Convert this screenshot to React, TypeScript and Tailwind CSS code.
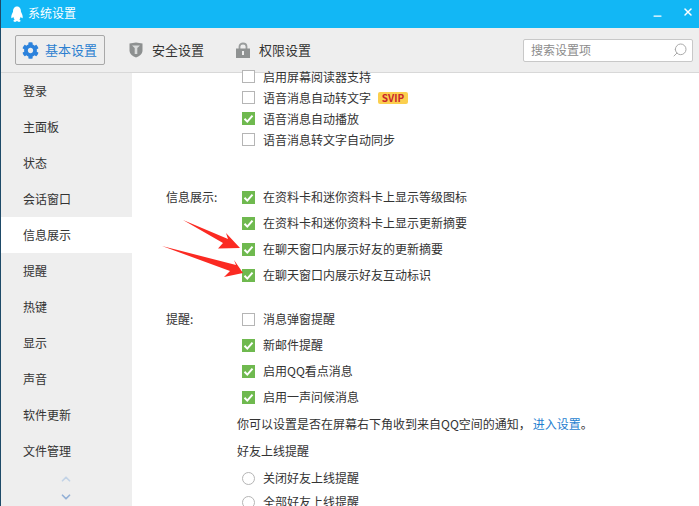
import { Search, Minus, X, ChevronUp, ChevronDown } from "lucide-react";
import { FaCog } from "react-icons/fa";

const menu = ["登录", "主面板", "状态", "会话窗口", "信息展示", "提醒", "热键", "显示", "声音", "软件更新", "文件管理"];

function Check({ on, label, extra }: { on?: boolean; label: string; extra?: boolean }) {
  return (
    <div className="flex items-center h-full">
      {on ? (
        <span className="w-[13px] h-[13px] bg-[#6fb94f] flex items-center justify-center shrink-0">
          <svg viewBox="0 0 13 13" className="w-[13px] h-[13px]">
            <path d="M2.5 6.8 L5.3 9.6 L10.5 3.6" fill="none" stroke="#fff" strokeWidth="2" />
          </svg>
        </span>
      ) : (
        <span className="w-[13px] h-[13px] bg-white border border-[#b5b5b5] shrink-0" />
      )}
      <span className="ml-2 text-[#333]">{label}</span>
      {extra && (
        <span className="ml-[7px] h-[12px] w-[30px] rounded-[2px] bg-[#fbcf4e] text-[#c8262c] text-[10px] leading-[12px] font-bold text-center">
          SVIP
        </span>
      )}
    </div>
  );
}

function Radio({ label }: { label: string }) {
  return (
    <div className="flex items-center h-full">
      <span className="w-[13px] h-[13px] rounded-full bg-white border border-[#b5b5b5] shrink-0" />
      <span className="ml-2 text-[#333]">{label}</span>
    </div>
  );
}

export default function App() {
  return (
    <div
      className="w-[699px] h-[506px] overflow-hidden flex flex-col bg-white text-[12px] border-l border-[#1e4a68] relative"
      style={{ fontFamily: '"Noto Sans CJK SC", "Noto Sans", sans-serif' }}
    >
      <div className="h-[28px] shrink-0 bg-[#12b7f5] flex items-center pl-[9px] text-white">
        <svg viewBox="0 0 14 18" className="w-[14px] h-[17px] mt-[1px]">
          <path
            d="M7 0.500C3.800 0.500 2.800 3.200 2.800 6.200C1.800 8 0.600 10.500 1 12.800C1.800 13.200 2.400 12.300 3 11.500C3.300 12.800 3.800 13.600 4.500 14.200C3.300 14.700 2.800 15.600 3.600 16.500C5 17.200 6.300 16.600 7 16C7.700 16.600 9 17.200 10.400 16.500C11.200 15.600 10.700 14.700 9.500 14.200C10.200 13.600 10.700 12.800 11 11.500C11.600 12.300 12.200 13.200 13 12.800C13.400 10.500 12.200 8 11.200 6.200C11.200 3.200 10.200 0.500 7 0.500Z"
            fill="#fff"
          />
        </svg>
        <span className="ml-[4px] -mt-[2px]">系统设置</span>
        <Minus className="w-[13px] h-[12px] ml-auto mt-[4px] mr-[18px]" strokeWidth={2.5} />
        <X className="w-[12px] h-[12px] mr-[5px] -mt-[4px]" strokeWidth={3} />
      </div>

      <div className="h-[45px] shrink-0 bg-[#eeeeee] border-b border-[#d8d8d8] flex items-center text-[13px] text-[#333] pl-[14px] pr-[5px]">
        <div className="w-[90px] h-[30px] border border-[#a8a8a8] rounded-[2px] flex items-center pl-[6px] text-[#2c7fd0]">
          <FaCog className="w-[17px] h-[17px] text-[#2c82dc]" />
          <span className="ml-[6px]">基本设置</span>
        </div>
        <svg viewBox="0 0 14 16" className="w-[14px] h-[16px] ml-[24px]">
          <path d="M0.500 1.500L7 0.500L13.500 1.500V8.500C13.500 12 10 14.500 7 15.500C4 14.500 0.500 12 0.500 8.500Z" fill="#8d9090" />
          <path d="M3 3.500H11L8.300 6V12H5.700V6Z" fill="#d9dbdb" />
        </svg>
        <span className="ml-[9px]">安全设置</span>
        <svg viewBox="0 0 14 16" className="w-[14px] h-[16px] ml-[32px]">
          <path d="M3.500 7V4.500C3.500 0.500 10.500 0.500 10.500 4.500V7" fill="none" stroke="#9a9d9d" strokeWidth="1.800" />
          <rect x="0" y="6.500" width="14" height="9.500" fill="#8f9292" />
          <rect x="6" y="9" width="2" height="4" fill="#eee" />
        </svg>
        <span className="ml-[9px]">权限设置</span>
        <div className="ml-auto mr-[1px] w-[170px] h-[23px] bg-white border border-[#c8c8c8] rounded-[2px] flex items-center pl-[7px] pr-[4px] text-[12px] text-[#8c8c8c]">
          <span>搜索设置项</span>
          <Search className="w-[16px] h-[16px] ml-auto text-[#aaa] -scale-x-100" strokeWidth={1.5} />
        </div>
      </div>

      <div className="flex-1 flex min-h-0">
        <div className="w-[131px] shrink-0 bg-[#eeeeee] flex flex-col">
          {menu.map((m) => (
            <div
              key={m}
              className={`h-[36px] shrink-0 flex items-center pl-[22px] text-[#333] ${m === "信息展示" ? "bg-white" : ""}`}
            >
              {m}
            </div>
          ))}
          <div className="flex flex-col items-center mt-[3px] -ml-[1px]">
            <ChevronUp className="w-[16px] h-[14px] text-[#c3d3e6]" strokeWidth={3} />
            <ChevronDown className="w-[16px] h-[14px] text-[#93b0d6] mt-[4px]" strokeWidth={3} />
          </div>
        </div>

        <div className="flex-1 min-w-0 overflow-hidden pl-[34px] -mt-[7px]">
          <div className="flex flex-col">
            <div className="pl-[76px] flex flex-col">
              <div className="h-[21px]"><Check label="启用屏幕阅读器支持" /></div>
              <div className="h-[21px]"><Check label="语音消息自动转文字" extra /></div>
              <div className="h-[21px]"><Check on label="语音消息自动播放" /></div>
              <div className="h-[21px]"><Check label="语音消息转文字自动同步" /></div>
            </div>

            <div className="flex mt-[34px]">
              <div className="w-[76px] h-[26px] flex items-center text-[#333]">信息展示:</div>
              <div className="flex flex-col">
                <div className="h-[26px]"><Check on label="在资料卡和迷你资料卡上显示等级图标" /></div>
                <div className="h-[26px]"><Check on label="在资料卡和迷你资料卡上显示更新摘要" /></div>
                <div className="h-[26px]"><Check on label="在聊天窗口内展示好友的更新摘要" /></div>
                <div className="h-[26px]"><Check on label="在聊天窗口内展示好友互动标识" /></div>
              </div>
            </div>

            <div className="flex mt-[18px]">
              <div className="w-[76px] h-[26px] flex items-center text-[#333]">提醒:</div>
              <div className="flex flex-col">
                <div className="h-[26px]"><Check label="消息弹窗提醒" /></div>
                <div className="h-[26px]"><Check on label="新邮件提醒" /></div>
                <div className="h-[26px]"><Check on label="启用QQ看点消息" /></div>
                <div className="h-[26px]"><Check on label="启用一声问候消息" /></div>
                <div className="h-[27px] -ml-[5px] flex items-center text-[#333] whitespace-nowrap">
                  你可以设置是否在屏幕右下角收到来自QQ空间的通知，
                  <span className="text-[#1f7fd0] ml-[2px]">进入设置</span>
                  <span>。</span>
                </div>
                <div className="h-[27px] -ml-[5px] flex items-center text-[#333]">好友上线提醒</div>
                <div className="h-[26px] mt-[1px]"><Radio label="关闭好友上线提醒" /></div>
                <div className="h-[22px]"><Radio label="全部好友上线提醒" /></div>
              </div>
            </div>
          </div>
        </div>
      </div>

      <svg viewBox="160 218 90 65" className="absolute left-[159px] top-[218px] w-[90px] h-[65px]">
        <path d="M183 220L228 239L226 233L240 248L218 248.500L223 243Z" fill="#fb2a22" />
        <path d="M162 246L236 265L234 260L243 273L224 277L230 271Z" fill="#fb2a22" />
      </svg>
    </div>
  );
}
